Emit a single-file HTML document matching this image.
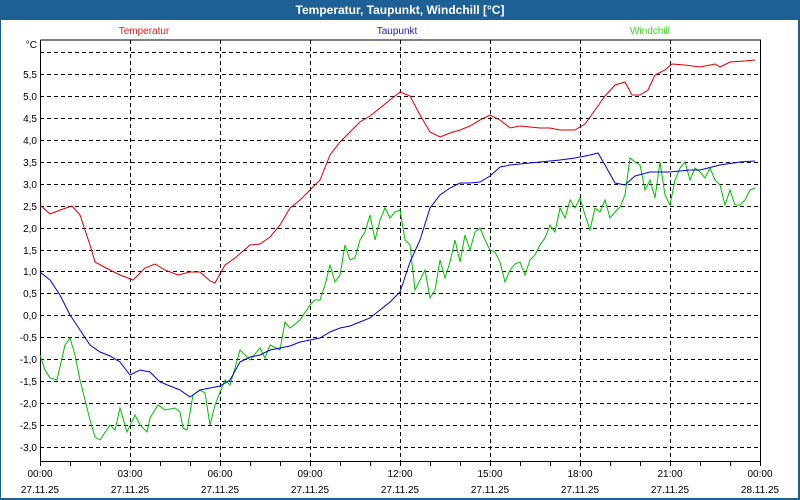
<!DOCTYPE html>
<html><head><meta charset="utf-8"><style>
html,body{margin:0;padding:0;background:#fff;}
svg{display:block;font-family:"Liberation Sans",Tahoma,sans-serif;}
</style></head><body>
<svg width="800" height="500" viewBox="0 0 800 500" xmlns="http://www.w3.org/2000/svg">
<rect x="0" y="0" width="800" height="500" fill="#1c6096"/>
<rect x="1" y="20" width="797" height="478" fill="#fff"/>
<text x="400" y="14" fill="#fff" font-size="12" font-weight="bold" text-anchor="middle">Temperatur, Taupunkt, Windchill [°C]</text>
<text x="144" y="34" fill="#e02020" font-size="10" text-anchor="middle">Temperatur</text>
<text x="397" y="34" fill="#2020d0" font-size="10" text-anchor="middle">Taupunkt</text>
<text x="650" y="34" fill="#40d020" font-size="10" text-anchor="middle">Windchill</text>
<g stroke="#000" stroke-width="1" stroke-dasharray="4,3" fill="none">
<path d="M40 52.5H760M40 74.5H760M40 96.5H760M40 118.5H760M40 140.5H760M40 162.5H760M40 184.5H760M40 206.5H760M40 228.5H760M40 250.5H760M40 271.5H760M40 293.5H760M40 315.5H760M40 337.5H760M40 359.5H760M40 381.5H760M40 403.5H760M40 425.5H760M40 447.5H760"/>
<path d="M130.5 40V461M220.5 40V461M310.5 40V461M400.5 40V461M490.5 40V461M580.5 40V461M670.5 40V461"/>
</g>
<path d="M40.5 40V461.5H760.5V40H40.5" stroke="#000" stroke-width="1" fill="none"/>
<path d="M40.5 461v5M70.5 461v5M100.5 461v5M130.5 461v5M160.5 461v5M190.5 461v5M220.5 461v5M250.5 461v5M280.5 461v5M310.5 461v5M340.5 461v5M370.5 461v5M400.5 461v5M430.5 461v5M460.5 461v5M490.5 461v5M520.5 461v5M550.5 461v5M580.5 461v5M610.5 461v5M640.5 461v5M670.5 461v5M700.5 461v5M730.5 461v5M760.5 461v5" stroke="#000"/>
<g font-size="10" fill="#000" text-anchor="end">
<text x="37" y="48">°C</text>
<text x="37" y="78">5,5</text><text x="37" y="100">5,0</text><text x="37" y="122">4,5</text><text x="37" y="144">4,0</text><text x="37" y="166">3,5</text><text x="37" y="188">3,0</text><text x="37" y="210">2,5</text><text x="37" y="232">2,0</text><text x="37" y="254">1,5</text><text x="37" y="275">1,0</text><text x="37" y="297">0,5</text><text x="37" y="319">0,0</text><text x="37" y="341">-0,5</text><text x="37" y="363">-1,0</text><text x="37" y="385">-1,5</text><text x="37" y="407">-2,0</text><text x="37" y="429">-2,5</text><text x="37" y="451">-3,0</text>
</g>
<g font-size="10" fill="#000" text-anchor="middle">
<text x="40" y="477">00:00</text><text x="130" y="477">03:00</text><text x="220" y="477">06:00</text><text x="310" y="477">09:00</text><text x="400" y="477">12:00</text><text x="490" y="477">15:00</text><text x="580" y="477">18:00</text><text x="670" y="477">21:00</text><text x="760" y="477">00:00</text>
<text x="40" y="493">27.11.25</text><text x="130" y="493">27.11.25</text><text x="220" y="493">27.11.25</text><text x="310" y="493">27.11.25</text><text x="400" y="493">27.11.25</text><text x="490" y="493">27.11.25</text><text x="580" y="493">27.11.25</text><text x="670" y="493">27.11.25</text><text x="760" y="493">28.11.25</text>
</g>
<polyline fill="none" stroke="#00c000" stroke-width="1" points="40,355 45,370 50,378 57,380 65,345 70,338 75,355 80,380 90,420 95,437 100,440 110,425 115,430 120,408 127,432 135,415 140,425 147,432 150,418 158,405 165,410 175,408 180,412 183,428 187,430 193,395 200,390 205,393 210,425 215,405 220,392 225,380 230,385 235,368 240,350 250,360 260,348 265,358 270,345 280,350 285,322 290,328 300,320 310,305 315,300 320,300 325,285 330,265 335,282 340,275 345,245 350,260 355,258 360,240 365,232 370,215 375,240 380,220 385,208 390,218 395,212 400,210 405,240 410,245 415,290 420,280 425,270 430,298 435,290 440,260 445,278 450,262 455,240 460,262 465,235 470,250 475,232 480,228 485,240 490,250 495,252 500,262 505,282 510,270 515,264 520,262 525,275 530,260 535,255 540,245 545,238 550,225 555,232 560,208 565,218 570,200 575,208 580,198 585,215 590,230 595,208 600,212 605,200 610,218 615,212 620,207 625,195 630,158 635,162 640,165 645,190 650,180 655,198 660,162 665,195 670,205 675,180 680,168 685,162 690,180 695,168 700,172 705,178 710,168 715,180 720,185 725,205 730,190 735,205 740,205 745,200 750,190 755,188"/>
<polyline fill="none" stroke="#0000e0" stroke-width="1" points="40,272 50,280 60,295 70,315 80,330 90,345 100,352 110,356 120,362 130,375 140,370 150,372 160,382 170,386 180,390 190,397 200,390 210,388 220,386 230,380 240,362 250,357 260,355 270,350 280,348 290,346 300,342 310,340 320,338 330,332 340,328 350,326 360,322 370,318 380,310 390,302 400,292 410,262 420,240 430,208 440,195 450,188 460,183 470,183 480,182 490,176 500,167 510,165 520,164 530,163 540,162 560,160 575,158 590,155 598,153 605,165 615,183 625,185 635,176 650,172 670,172 690,170 700,170 720,165 740,162 755,161"/>
<polyline fill="none" stroke="#e00000" stroke-width="1" points="40,205 50,214 60,210 72,206 80,215 90,245 95,262 110,270 120,275 133,280 145,268 155,264 165,270 178,275 190,272 200,272 210,281 215,283 225,265 235,258 250,245 260,244 270,237 280,225 290,208 300,200 310,190 320,180 330,155 340,142 350,132 360,122 370,116 380,108 390,100 400,92 410,96 420,115 430,132 440,137 450,133 460,130 470,126 480,120 490,115 500,120 510,128 520,126 540,128 550,128 560,130 575,130 585,124 595,110 605,96 615,85 625,82 632,95 640,95 648,90 655,75 665,70 672,64 685,65 700,67 715,64 720,67 730,62 745,61 755,60"/>
</svg>
</body></html>
